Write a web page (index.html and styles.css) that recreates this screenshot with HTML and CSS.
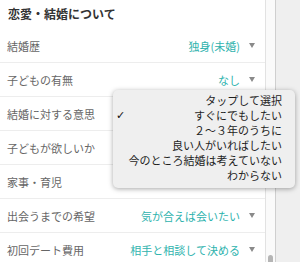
FILE: index.html
```html
<!DOCTYPE html>
<html lang="ja">
<head>
<meta charset="utf-8">
<link rel="stylesheet" href="styles.css">
</head>
<body>
<div class="page">
  <div class="panel">
    <div class="heading">恋愛・結婚について</div>
    <div class="row"><span class="label">結婚歴</span><span class="value">独身(未婚)</span><span class="arrow"></span></div>
    <div class="row"><span class="label">子どもの有無</span><span class="value">なし</span><span class="arrow"></span></div>
    <div class="row"><span class="label">結婚に対する意思</span></div>
    <div class="row"><span class="label">子どもが欲しいか</span></div>
    <div class="row"><span class="label">家事・育児</span></div>
    <div class="row"><span class="label">出会うまでの希望</span><span class="value">気が合えば会いたい</span><span class="arrow"></span></div>
    <div class="row"><span class="label">初回デート費用</span><span class="value">相手と相談して決める</span><span class="arrow"></span></div>
  </div>
  <div class="track"><div class="thumb"></div></div>
  <div class="side"></div>
  <div class="popup">
    <div class="option">タップして選択</div>
    <div class="option selected"><span class="check">✓</span>すぐにでもしたい</div>
    <div class="option">２〜３年のうちに</div>
    <div class="option">良い人がいればしたい</div>
    <div class="option">今のところ結婚は考えていない</div>
    <div class="option">わからない</div>
  </div>
</div>
</body>
</html>
```
FILE: styles.css
```css
html, body {
  margin: 0;
  padding: 0;
}
body {
  font-family: "Noto Sans CJK JP", "Noto Sans", sans-serif;
  background: #efefef;
}
.page {
  position: relative;
  display: flex;
  width: 300px;
  height: 262px;
  overflow: hidden;
}
.panel {
  width: 265px;
  flex: none;
  background: #fff;
  border-right: 1px solid #e2e2e2;
}
.heading {
  height: 29px;
  box-sizing: border-box;
  padding: 5px 0 0 8px;
  font-size: 12px;
  font-weight: bold;
  color: #333;
  line-height: 18px;
}
.row {
  height: 33px;
  border-bottom: 1px solid #ededed;
  display: flex;
  align-items: center;
  padding: 0 10px 0 7px;
  font-size: 11px;
}
.label {
  color: #666;
  flex: 1;
}
.value {
  color: #2fb3ae;
}
.arrow {
  width: 0;
  height: 0;
  margin-left: 9px;
  border-left: 3.5px solid transparent;
  border-right: 3.5px solid transparent;
  border-top: 5px solid #8a8a8a;
}
.track {
  width: 9px;
  flex: none;
  background: #fafafa;
  border-right: 1px solid #cfcfcf;
  position: relative;
}
.thumb {
  position: absolute;
  left: 2px;
  top: 255px;
  width: 5px;
  height: 20px;
  border-radius: 3px;
  background: #b5b5b5;
}
.side {
  flex: 1;
  background: #efefef;
}
.popup {
  position: absolute;
  left: 113px;
  top: 90px;
  width: 182px;
  box-sizing: border-box;
  padding: 3px 13px 5px 0;
  background: #efefef;
  border-radius: 5px;
  box-shadow: 0 1px 5px rgba(0, 0, 0, 0.35);
  text-align: right;
}
.option {
  font-size: 11px;
  line-height: 15px;
  color: #1e1e1e;
  white-space: nowrap;
}
.selected {
  position: relative;
}
.check {
  position: absolute;
  left: 3px;
  top: 0;
  font-family: "DejaVu Sans", sans-serif;
  font-size: 11px;
  font-weight: bold;
  color: #111;
}
```
